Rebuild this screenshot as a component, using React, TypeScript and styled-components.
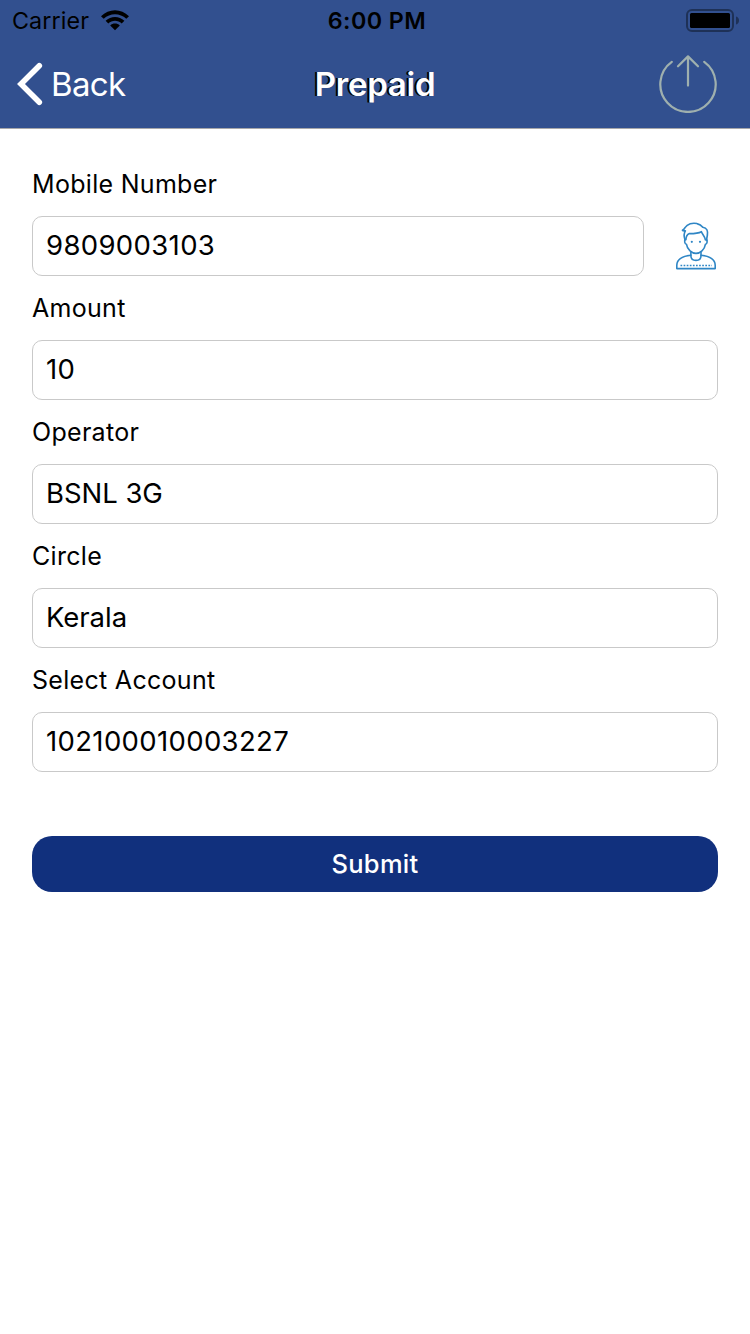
import React from "react";
import styled, { createGlobalStyle } from "styled-components";

const GlobalStyle = createGlobalStyle`
  *, *::before, *::after { box-sizing: border-box; }
  html, body { margin: 0; padding: 0; background: #fff; }
  body { font-family: Inter, "Liberation Sans", sans-serif; color: #000; }
  button, input { font-family: inherit; }
`;

const Screen = styled.div`
  display: flex;
  flex-direction: column;
  width: 750px;
  height: 1334px;
  overflow: hidden;
  background: #fff;
`;

const Header = styled.header`
  height: 129px;
  background: #32508f;
  border-bottom: 1px solid #a7a7aa;
`;

const BarRow = styled.div<{ $height: number; $pad: string }>`
  display: grid;
  grid-template-columns: 1fr auto 1fr;
  align-items: center;
  height: ${(p) => p.$height}px;
  padding: ${(p) => p.$pad};
`;

const Side = styled.div<{ $end?: boolean; $gap?: number }>`
  display: flex;
  align-items: center;
  justify-content: ${(p) => (p.$end ? "flex-end" : "flex-start")};
  gap: ${(p) => p.$gap ?? 0}px;
`;

const StatusText = styled.span<{ $strong?: boolean; $spacing: number }>`
  padding: ${(p) => (p.$strong ? "2px 0 0 2px" : "2px 0 0")};
  font-size: 23.3px;
  line-height: 38px;
  font-weight: ${(p) => (p.$strong ? 600 : 400)};
  letter-spacing: ${(p) => p.$spacing}px;
  white-space: nowrap;
`;

const BackButton = styled.button`
  display: flex;
  align-items: center;
  gap: 8px;
  padding: 0;
  border: 0;
  background: none;
  color: #fff;
  font-size: 33px;
  line-height: 40px;
  letter-spacing: -0.65px;
`;

const Title = styled.h1`
  margin: 0;
  color: #fff;
  font-size: 33px;
  line-height: 40px;
  font-weight: 600;
  letter-spacing: -0.25px;
  text-shadow: -2px 0 0 #000;
`;

const IconButton = styled.button`
  display: flex;
  margin: -2px 15px 0 0;
  padding: 0;
  border: 0;
  background: none;
`;

const Form = styled.main`
  display: flex;
  flex-direction: column;
  padding: 39px 32px 0;
`;

const Field = styled.div`
  display: flex;
  flex-direction: column;
  height: 124px;
`;

const Label = styled.label`
  height: 48px;
  font-size: 25px;
  line-height: 32px;
  letter-spacing: 0.3px;
`;

const InputRow = styled.div`
  display: flex;
  align-items: center;
`;

const Input = styled.input<{ $numeric: boolean }>`
  flex: 1;
  min-width: 0;
  height: 60px;
  padding: 0 13px 2px;
  border: 1px solid #c9c9c9;
  border-radius: 10px;
  outline: 0;
  background: #fff;
  color: #000;
  font-size: 27.5px;
  letter-spacing: ${(p) => (p.$numeric ? 0.35 : -0.05)}px;
`;

const ContactButton = styled.button`
  display: flex;
  width: 74px;
  height: 60px;
  padding: 0 0 0 14px;
  border: 0;
  background: none;
`;

const Submit = styled.button`
  height: 56px;
  margin-top: 48px;
  padding: 0;
  border: 0;
  border-radius: 20px;
  background: #11307d;
  color: #fff;
  font-size: 25.5px;
  line-height: 56px;
  font-weight: 500;
  letter-spacing: 0.3px;
`;

const WifiIcon = () => (
  <svg width="28" height="21" viewBox="0 0 28 21">
    <path d="M0 6.2C7.8-1.9 20.2-1.9 28 6.2L25.3 8.8C19 2.6 9 2.6 2.7 8.8Z" />
    <path d="M4.6 10.8C9.8 5.6 18.2 5.6 23.4 10.8L20.7 13.5C17 9.9 11 9.9 7.3 13.5Z" />
    <path d="M9.2 15.4C11.9 12.8 16.1 12.8 18.8 15.4L14 20.2Z" />
  </svg>
);

const BatteryIcon = () => (
  <svg width="54" height="23" viewBox="0 0 54 23">
    <rect x="1" y="1" width="46" height="21" rx="5" fill="none" stroke="#1e3157" strokeWidth="2" />
    <rect x="4" y="4" width="40" height="15" rx="1.5" />
    <path d="M50 7.5C52 8 53 9.5 53 11.5S52 15 50 15.5Z" fill="#1e3157" />
  </svg>
);

const ChevronIcon = () => (
  <svg width="26" height="44" viewBox="0 0 26 44">
    <path d="M22.3 3.8L4 22L22.3 40.2" fill="none" stroke="#fff" strokeWidth="5.6" strokeLinecap="round" strokeLinejoin="miter" />
  </svg>
);

const ShareIcon = () => (
  <svg width="60" height="60" viewBox="0 0 60 60" fill="none" stroke="#9fb0ae" strokeWidth="2.2" strokeLinecap="round" strokeLinejoin="round">
    <path d="M13.8 8.8A27.7 27.7 0 1 0 46.2 8.8" />
    <path d="M30 32.6V3.6M20 13.3L30 3.4L40 13.3" />
  </svg>
);

const PersonIcon = () => (
  <svg width="60" height="60" viewBox="658 216 60 60" fill="none" stroke="#2f86c5" strokeWidth="1.6" strokeLinecap="round" strokeLinejoin="round">
    <path d="M685 240C683.8 236.5 684 233 685.4 230.8C683.8 230.9 682.6 230.8 682.4 230.2C683.6 229.7 684.6 228.6 685 227.6C687.4 224 692.5 222.4 697 223.6C700 224.2 701.7 225.7 702.8 227.2C707 227.6 708 231 707.4 235L706.4 240.5" />
    <path d="M685.9 239.8C686 236.6 686.8 234.6 689.4 233.6C694 233.6 698 233.6 701.4 231.7C702.2 234.2 704.6 235.6 705.4 239.8" />
    <path d="M685.3 239.2C684.1 240.3 684.6 244.4 686.5 244.4C687.2 249.6 692 253.4 696 253.4C700.2 253.4 704.6 249.6 705.4 244.4C707.3 244.3 707.7 240.3 706.4 239.2" />
    <path d="M690.9 252V256C691 259.2 693.2 260.4 696 260.4S700.9 259.2 701 256V252" />
    <path d="M690.9 255.3C684 256 677 258.3 676.8 265.3V268.6H715.2V265.3C715 258.3 708 256 701 255.3" />
    <path d="M680.5 265.5H712" strokeWidth="1.3" strokeDasharray="1.7 1.4" strokeLinecap="butt" />
    <circle cx="691.8" cy="241.8" r="1.1" fill="#2f86c5" stroke="none" />
    <circle cx="700" cy="241.8" r="1.1" fill="#2f86c5" stroke="none" />
  </svg>
);

const fields = [
  { id: "mobile", label: "Mobile Number", value: "9809003103", contact: true },
  { id: "amount", label: "Amount", value: "10" },
  { id: "operator", label: "Operator", value: "BSNL 3G" },
  { id: "circle", label: "Circle", value: "Kerala" },
  { id: "account", label: "Select Account", value: "102100010003227" },
];

export default function App() {
  return (
    <Screen>
      <GlobalStyle />
      <Header>
        <BarRow $height={40} $pad="0 10px 0 12px">
          <Side $gap={12}>
            <StatusText $spacing={0.1}>Carrier</StatusText>
            <WifiIcon />
          </Side>
          <StatusText $strong $spacing={0.45}>6:00 PM</StatusText>
          <Side $end>
            <BatteryIcon />
          </Side>
        </BarRow>
        <BarRow $height={88} $pad="0 17px">
          <Side>
            <BackButton>
              <ChevronIcon />
              Back
            </BackButton>
          </Side>
          <Title>Prepaid</Title>
          <Side $end>
            <IconButton aria-label="Log out">
              <ShareIcon />
            </IconButton>
          </Side>
        </BarRow>
      </Header>
      <Form>
        {fields.map((f) => (
          <Field key={f.id}>
            <Label htmlFor={f.id}>{f.label}</Label>
            <InputRow>
              <Input id={f.id} defaultValue={f.value} $numeric={/^\d+$/.test(f.value)} />
              {f.contact && (
                <ContactButton aria-label="Contacts">
                  <PersonIcon />
                </ContactButton>
              )}
            </InputRow>
          </Field>
        ))}
        <Submit>Submit</Submit>
      </Form>
    </Screen>
  );
}
